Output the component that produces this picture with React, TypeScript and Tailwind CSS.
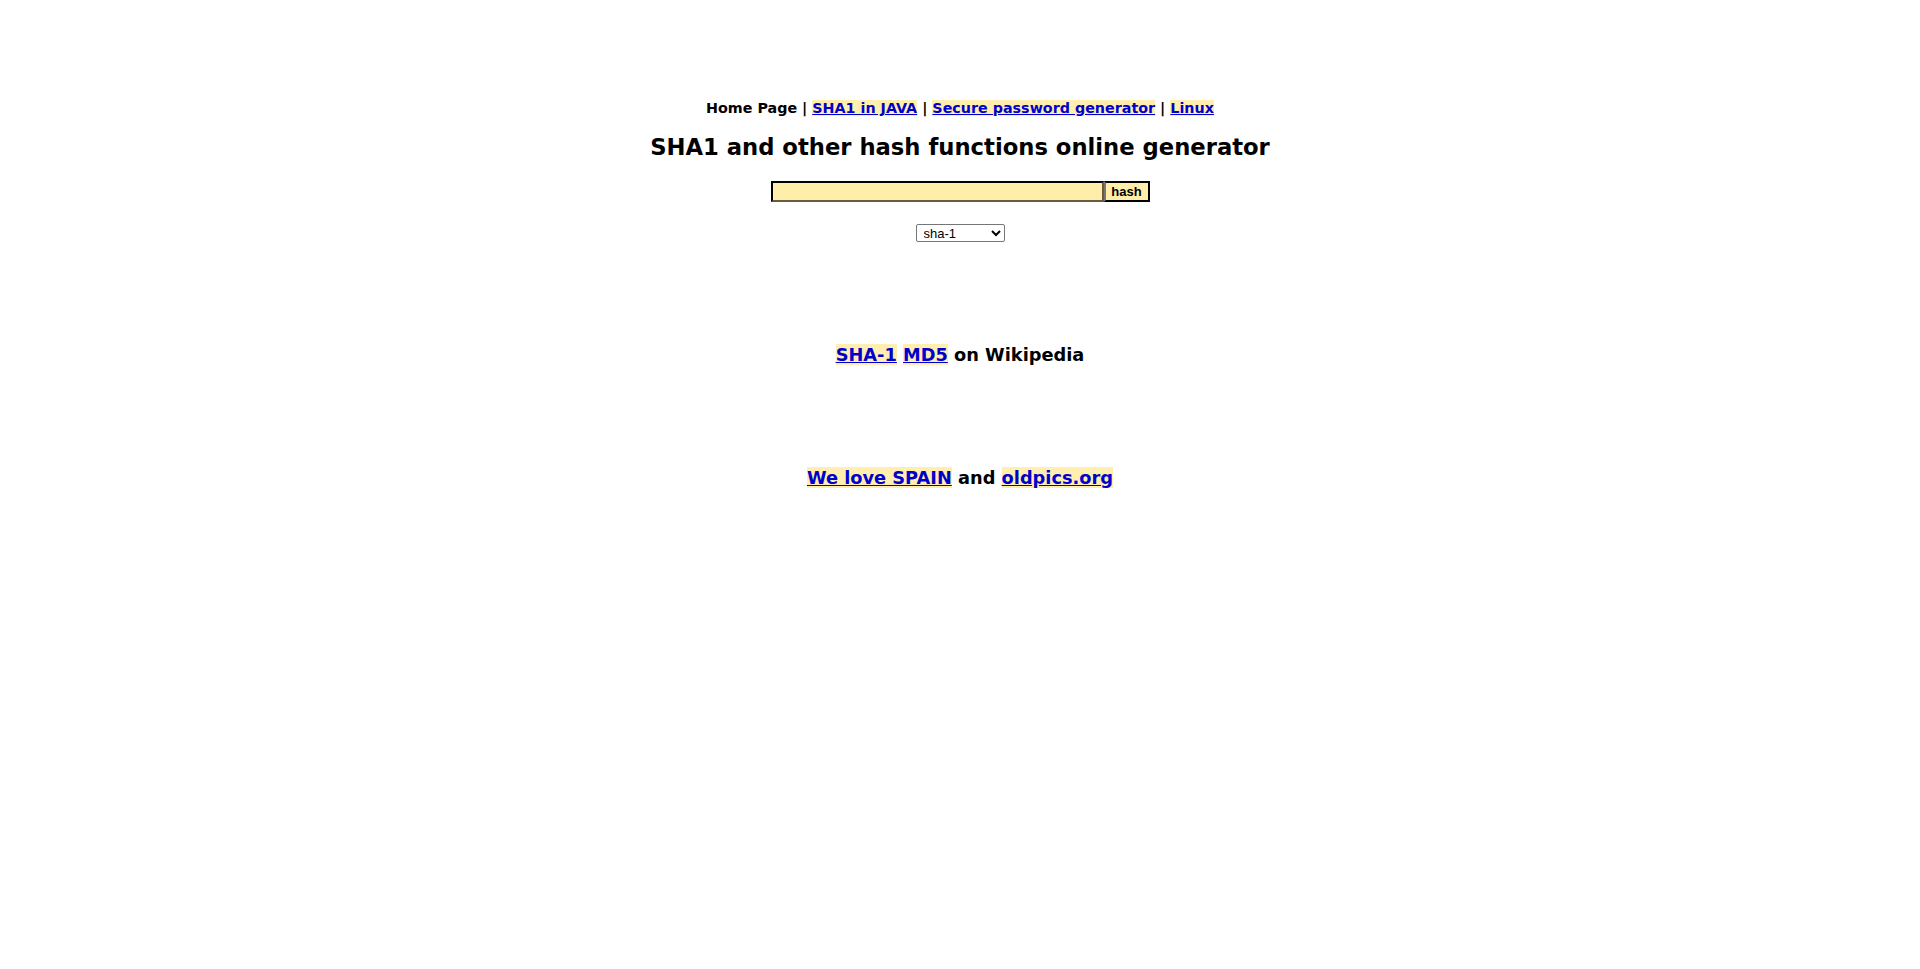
import React from "react";

const linkCls = "text-[#0000cc] underline bg-[#ffeeb0]";

export default function App() {
  return (
    <div className="min-h-[969px] bg-white text-black font-bold text-center" style={{ fontFamily: '"DejaVu Sans", Verdana, sans-serif' }}>
      <div className="pt-[99px] text-[14.3px] leading-[18px]">
        Home Page |{" "}
        <a href="#" className={linkCls}>SHA1 in JAVA</a> |{" "}
        <a href="#" className={linkCls}>Secure password generator</a> |{" "}
        <a href="#" className={linkCls}>Linux</a>
      </div>
      <h1 className="mt-[16px] text-[22.7px] leading-[28px]">SHA1 and other hash functions online generator</h1>
      <div className="mt-[20px] flex justify-center">
        <input
          type="text"
          className="w-[333px] h-[21px] bg-[#ffeeaa] border-2 border-t-black border-l-black border-r-[#6b5b3e] border-b-[#6b5b3e] outline-none"
        />
        <button className="w-[46px] h-[21px] bg-[#ffeeaa] border-2 border-black border-l-[#777] text-[13px] leading-[15px] font-bold" style={{ fontFamily: 'Arial, "Liberation Sans", sans-serif' }}>
          hash
        </button>
      </div>
      <div className="mt-[22px] flex justify-center">
        <select
          className="w-[89px] h-[18px] border border-[#767676] rounded-[2px] bg-white text-[13px] leading-[15px] font-normal pl-[3px] appearance-auto"
          style={{ fontFamily: 'Arial, "Liberation Sans", sans-serif' }}
          defaultValue="sha-1"
        >
          <option>sha-1</option>
          <option>md5</option>
          <option>sha-256</option>
        </select>
      </div>
      <div className="mt-[101px] text-[17.8px] leading-[24px]">
        <a href="#" className={linkCls}>SHA-1</a>{" "}
        <a href="#" className={linkCls}>MD5</a> on Wikipedia
      </div>
      <div className="mt-[99px] text-[17.8px] leading-[24px]">
        <a href="#" className={linkCls}>We love SPAIN</a> and{" "}
        <a href="#" className={linkCls}>oldpics.org</a>
      </div>
    </div>
  );
}
